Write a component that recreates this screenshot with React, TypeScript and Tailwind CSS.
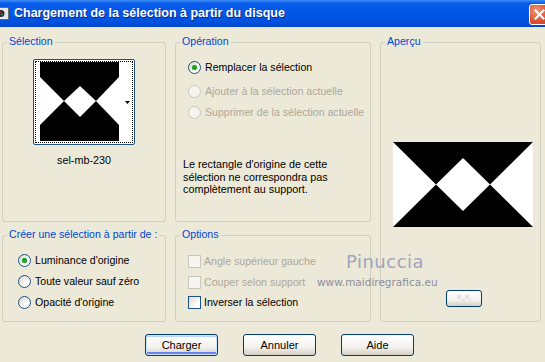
import React from 'react';

const Radio: React.FC<{ checked?: boolean; disabled?: boolean }> = ({ checked, disabled }) => (
  <span
    className={`inline-flex h-[13px] w-[13px] shrink-0 items-center justify-center rounded-full border ${
      disabled
        ? 'border-[#CAC8BB] bg-[#F5F4EF]'
        : 'border-[#1C5180] bg-[linear-gradient(135deg,#D8D7D0,#FFFFFF_70%)]'
    }`}
  >
    {checked && <span className="h-[5px] w-[5px] rounded-full bg-[#21A121] shadow-[0_0_1px_#5fd35f]" />}
  </span>
);

const Check: React.FC<{ disabled?: boolean }> = ({ disabled }) => (
  <span
    className={`inline-block h-[13px] w-[13px] shrink-0 border ${
      disabled
        ? 'border-[#CAC8BB] bg-[#F5F4EF]'
        : 'border-[#1C5180] bg-[linear-gradient(135deg,#DCDBD5,#FFFFFF_75%)]'
    }`}
  />
);

const Group: React.FC<{ label: string; className?: string; children?: React.ReactNode }> = ({ label, className, children }) => (
  <div className={`relative rounded-[3px] border border-[#D0D0BF] ${className ?? ''}`}>
    <span className="absolute -top-[9px] left-[4px] whitespace-nowrap bg-[#ECE9D8] px-[2px] text-[10.6px] leading-[14px] text-[#0046D5]">
      {label}
    </span>
    {children}
  </div>
);

const Button: React.FC<{ label: string; primary?: boolean }> = ({ label, primary }) => (
  <button
    className={`flex h-[22px] w-[73px] items-center justify-center rounded-[3px] border border-[#003C74] bg-[linear-gradient(to_bottom,#FFFFFF,#F3F2EE_60%,#D6D0C5)] text-[11px] text-black ${
      primary ? 'shadow-[inset_0_0_0_1px_#CEE7FF,inset_0_-2px_0_1px_#6982EE,inset_0_1px_0_1px_#BBD3FA]' : ''
    }`}
  >
    {label}
  </button>
);

const OptionRow: React.FC<{ control: React.ReactNode; text: string; disabled?: boolean; gap?: string }> = ({ control, text, disabled, gap }) => (
  <div className={`flex h-[13px] items-center ${gap ?? 'gap-[4px]'}`}>
    {control}
    <span className={`whitespace-nowrap text-[10.6px] leading-[13px] ${disabled ? 'text-[#ACA899]' : 'text-black'}`}>{text}</span>
  </div>
);

const App: React.FC = () => {
  return (
    <div className="relative flex h-[362px] w-[545px] flex-col overflow-hidden bg-[#ECE9D8] font-['Liberation_Sans',Arial,sans-serif]">
      {/* Title bar */}
      <div className="flex h-[27px] shrink-0 items-center justify-between bg-[linear-gradient(to_bottom,#3D8DF5,#0A5CEB_12%,#0055E5_55%,#0050DC_85%,#0046C8)]">
        <div className="flex items-center gap-[5px]">
          <svg width="12" height="13" viewBox="0 0 12 13" className="-ml-[3px]">
            <rect x="0.5" y="0.5" width="11" height="12" fill="#E8E8E8" stroke="#6A6A6A" />
            <circle cx="4" cy="6.5" r="3.5" fill="#2A2A3A" />
            <circle cx="3" cy="5.5" r="1" fill="#C03030" />
            <circle cx="5" cy="7.5" r="1" fill="#30A040" />
          </svg>
          <span className="text-[12.5px] font-bold text-white [text-shadow:1px_1px_0_#0A2A8A]">
            Chargement de la sélection à partir du disque
          </span>
        </div>
        <div className="-mr-[5px] mt-[1px] flex h-[21px] w-[21px] items-center justify-center rounded-[3px] border border-white bg-[radial-gradient(circle_at_35%_30%,#F0967A,#E0502F_60%,#C8401F)]">
          <svg width="11" height="11" viewBox="0 0 11 11">
            <path d="M1.5 1.5 L9.5 9.5 M9.5 1.5 L1.5 9.5" stroke="white" strokeWidth="2" strokeLinecap="square" />
          </svg>
        </div>
      </div>

      {/* Body */}
      <div className="flex gap-[9px] pl-[2px] pt-[15px]">
        <div className="flex flex-col gap-[13px]">
          <div className="flex gap-[9px]">
            <Group label="Sélection" className="flex h-[180px] w-[164px] flex-col items-center pt-[16px]">
              <div className="h-[86px] w-[102px] rounded-[2px] border border-[#1C5180] bg-white p-[1px]">
                <div className="flex h-full w-full border border-dotted border-black pl-[4px]">
                  <svg width="79" height="79" viewBox="0 0 79 79" className="shrink-0">
                    <rect width="79" height="79" fill="#000" />
                    <polygon points="0,15 24,39 0,63" fill="#fff" />
                    <polygon points="79,15 56,39 79,63" fill="#fff" />
                    <polygon points="24,39 40,24 56,39 40,55" fill="#fff" />
                  </svg>
                  <div className="flex flex-1 items-center justify-end pr-[2px]">
                    <svg width="5" height="3" viewBox="0 0 5 3">
                      <polygon points="0,0 5,0 2.5,3" fill="#000" />
                    </svg>
                  </div>
                </div>
              </div>
              <span className="mt-[9px] text-[10.8px] leading-[13px] text-black">sel-mb-230</span>
            </Group>

            <Group label="Opération" className="flex h-[180px] w-[196px] flex-col pl-[12px] pt-[18px]">
              <OptionRow control={<Radio checked />} text="Remplacer la sélection" />
              <div className="mt-[11px]">
                <OptionRow control={<Radio disabled />} text="Ajouter à la sélection actuelle" disabled />
              </div>
              <div className="mt-[8px]">
                <OptionRow control={<Radio disabled />} text="Supprimer de la sélection actuelle" disabled />
              </div>
              <p className="-ml-[5px] mt-[39px] text-[10.8px] leading-[12.5px] text-black">
                Le rectangle d'origine de cette
                <br />
                sélection ne correspondra pas
                <br />
                complètement au support.
              </p>
            </Group>
          </div>

          <div className="flex gap-[9px]">
            <Group label="Créer une sélection à partir de :" className="flex h-[87px] w-[164px] flex-col gap-[8px] pl-[15px] pt-[18px]">
              <OptionRow control={<Radio checked />} text="Luminance d'origine" />
              <OptionRow control={<Radio />} text="Toute valeur sauf zéro" />
              <OptionRow control={<Radio />} text="Opacité d'origine" />
            </Group>

            <Group label="Options" className="flex h-[87px] w-[196px] flex-col gap-[7.5px] pl-[12px] pt-[19px]">
              <OptionRow control={<Check disabled />} text="Angle supérieur gauche" disabled gap="gap-[3px]" />
              <OptionRow control={<Check disabled />} text="Couper selon support" disabled gap="gap-[3px]" />
              <OptionRow control={<Check />} text="Inverser la sélection" gap="gap-[3px]" />
            </Group>
          </div>
        </div>

        <Group label="Aperçu" className="flex h-[280px] w-[161px] flex-col pl-[12px] pt-[99px]">
          <svg width="140" height="85" viewBox="0 0 140 85">
            <rect width="140" height="85" fill="#fff" />
            <polygon points="0,0 140,0 97,42.5 70,16 43,42.5" fill="#000" />
            <polygon points="0,85 43,42.5 70,69 97,42.5 140,85" fill="#000" />
          </svg>
          <div className="ml-[53px] mt-[63px] flex h-[17px] w-[36px] items-center justify-center rounded-[3px] border border-[#003C74] bg-[linear-gradient(to_bottom,#FFFFFF,#F3F2EE_60%,#D6D0C5)]">
            <svg width="14" height="8" viewBox="0 0 14 8">
              <rect x="0" y="0" width="4" height="4" fill="#E4E4E4" />
              <rect x="8" y="0" width="4" height="4" fill="#E4E4E4" />
              <rect x="4" y="4" width="4" height="4" fill="#E4E4E4" />
              <rect x="12" y="4" width="2" height="4" fill="#E4E4E4" />
            </svg>
          </div>
        </Group>
      </div>

      {/* Buttons */}
      <div className="mt-[12px] flex gap-[25px] pl-[145px]">
        <Button label="Charger" primary />
        <Button label="Annuler" />
        <Button label="Aide" />
      </div>

      {/* Watermark */}
      <span className="pointer-events-none absolute left-[346px] top-[251px] text-[18px] leading-[22px] tracking-[0.5px] text-[#A3A3BC] font-['DejaVu_Sans',sans-serif]">
        Pinuccia
      </span>
      <span className="pointer-events-none absolute left-[317px] top-[276px] text-[10.5px] leading-[12px] text-[#8E8E9E] font-['DejaVu_Sans',sans-serif]">
        www.maidiregrafica.eu
      </span>
    </div>
  );
};

export default App;
